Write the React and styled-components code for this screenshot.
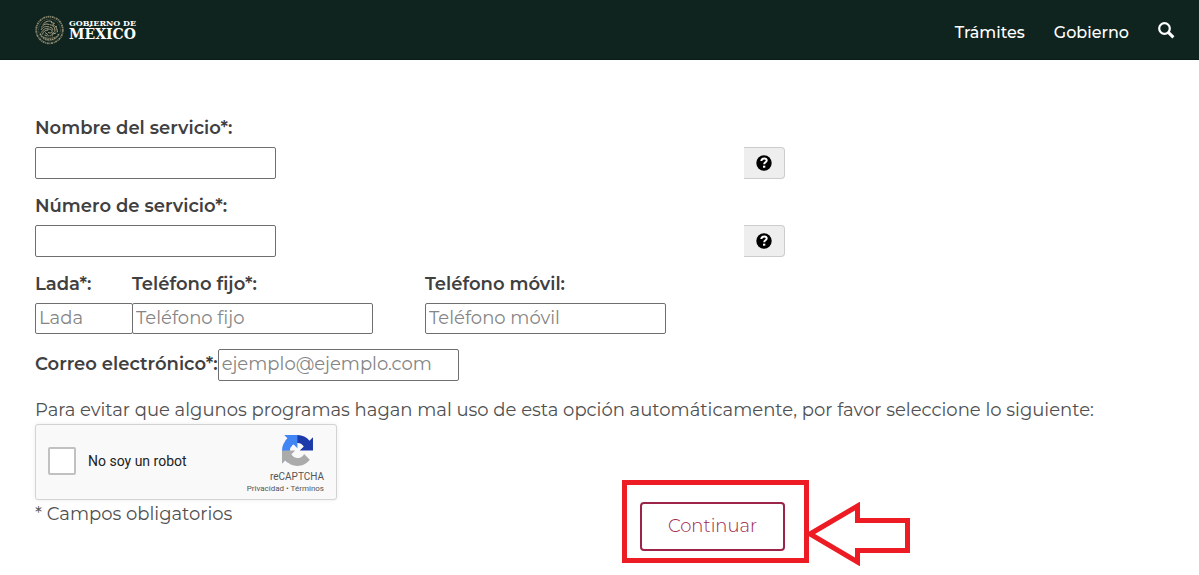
import React, { useState } from 'react';
import styled, { createGlobalStyle } from 'styled-components';

const GlobalStyle = createGlobalStyle`
  * {
    box-sizing: border-box;
  }

  body {
    margin: 0;
    background: #fff;
    color: #404041;
    font-family: Montserrat, Inter, sans-serif;
    font-size: 18px;
    font-weight: 300;
    line-height: 28px;
  }
`;

const Header = styled.header`
  display: flex;
  align-items: center;
  justify-content: space-between;
  height: 60px;
  padding: 0 24px 0 35px;
  background-color: #0f241f;
  border-bottom: 1px solid #0b1b17;
`;

const Brand = styled.a`
  display: flex;
  align-items: center;
  gap: 5px;
  color: #fff;
  text-decoration: none;
  font-family: 'DejaVu Serif', serif;
  font-weight: 700;
`;

const BrandText = styled.span`
  display: flex;
  flex-direction: column;
`;

const BrandSmall = styled.span`
  font-size: 8px;
  line-height: 10px;
`;

const BrandLarge = styled.span`
  font-size: 14px;
  line-height: 13px;
`;

const Nav = styled.nav`
  display: flex;
  align-items: center;
  gap: 29px;
  padding-top: 6px;
`;

const NavLink = styled.a`
  color: #fff;
  font-size: 16px;
  font-weight: 500;
  line-height: 24px;
  text-decoration: none;
`;

const SearchButton = styled.button`
  display: flex;
  padding: 0 0 4px;
  border: none;
  background: none;
  color: #fff;
  cursor: pointer;
`;

const Form = styled.form`
  padding: 55px 35px 24px;
`;

const Fields = styled.div`
  max-width: 750px;
`;

const Field = styled.div`
  display: flex;
  flex-direction: column;
  align-items: flex-start;
  gap: 6px;
  margin-bottom: 14px;
  width: ${({ $width }) => $width || 'auto'};
`;

const Label = styled.label`
  font-size: 18px;
  font-weight: 600;
  line-height: 26px;
  white-space: nowrap;
`;

const InputRow = styled.div`
  display: flex;
  align-self: stretch;
  justify-content: space-between;
`;

const Input = styled.input`
  width: ${({ $short }) => ($short ? '98px' : '241px')};
  height: ${({ $compact }) => ($compact ? '31px' : '32px')};
  padding: 0 3px 2px;
  border: 1px solid #6f6f6f;
  border-radius: 2px;
  background: #fff;
  color: #404041;
  font-family: inherit;
  font-size: 18px;
  font-weight: 400;

  &::placeholder {
    color: #858585;
    opacity: 1;
  }
`;

const HelpButton = styled.button`
  display: flex;
  align-items: center;
  justify-content: center;
  width: 41px;
  height: 32px;
  padding: 0;
  border: 1px solid #ccc;
  border-left: none;
  border-radius: 0 4px 4px 0;
  background-color: #eee;
  color: #000;
  cursor: pointer;
`;

const PhoneRow = styled.div`
  display: flex;
`;

const EmailRow = styled.div`
  display: flex;
  align-items: center;
  margin: 1px 0 15px;

  label {
    padding-bottom: 2px;
  }
`;

const Text = styled.p`
  margin: 0;
  color: #505051;
  font-weight: 400;
`;

const Captcha = styled.div`
  display: flex;
  justify-content: space-between;
  width: 302px;
  height: 76px;
  padding: 0 12px;
  border: 1px solid #d3d3d3;
  border-radius: 3px;
  background-color: #f9f9f9;
  box-shadow: 0 0 4px rgba(0, 0, 0, 0.08);
  font-family: Roboto, sans-serif;
  font-weight: 400;
`;

const CaptchaLabel = styled.label`
  display: flex;
  align-items: center;
  gap: 12px;
  padding-bottom: 2px;
  color: #222;
  font-size: 14px;
  line-height: 17px;
`;

const Checkbox = styled.input`
  appearance: none;
  width: 28px;
  height: 28px;
  margin: 0;
  border: 2px solid #c1c1c1;
  border-radius: 2px;
  background-color: #fff;

  &:checked {
    background-color: #4a90e2;
  }
`;

const CaptchaBrand = styled.div`
  display: flex;
  flex-direction: column;
  align-items: flex-end;
  padding-top: 10px;
  color: #555;
  font-size: 10px;
  line-height: 12px;

  svg {
    margin: 0 11px 5px 0;
  }
`;

const CaptchaLinks = styled.div`
  font-size: 8px;
  line-height: 12px;

  a {
    color: inherit;
    text-decoration: none;
  }
`;

const Actions = styled.div`
  display: flex;
  align-items: flex-start;
  justify-content: space-between;
`;

const SubmitArea = styled.div`
  position: relative;
  padding-top: 2px;
`;

const SubmitButton = styled.button`
  display: block;
  width: 145px;
  height: 49px;
  padding: 0 0 2px;
  border: 2px solid #9d2449;
  border-radius: 4px;
  background: #fff;
  color: #9d2449;
  font-family: inherit;
  font-size: 18px;
  font-weight: 300;
  cursor: pointer;
`;

const Highlight = styled.div`
  position: absolute;
  top: -20px;
  left: -18px;
  width: 187px;
  height: 83px;
  border: 5px solid #ed1c24;
  pointer-events: none;
`;

const Arrow = styled.svg`
  position: absolute;
  top: 2px;
  left: 166px;
`;

const Seal = () => (
  <svg width="29" height="30" viewBox="0 0 29 30" fill="none" stroke="#a79d80" aria-hidden="true">
    <circle cx="14.5" cy="15" r="13.300" strokeWidth="1.800" strokeDasharray="2 .6 1 .7" opacity=".8" />
    <circle cx="14.5" cy="15" r="10.900" strokeWidth=".7" strokeDasharray="2 .8" opacity=".5" />
    <path
      d="M8 9.500c2-3 6-4.400 9-2.800M6.500 12.500c1.500-3.500 5-4 7.500-3M6 15c2-3.500 5-4 8-3M6.400 17.500c2-3.500 4.500-4.500 7-4M7.500 19.500c.5-3 3-4.500 5.500-4.400M16 7.500l3.500.8-1.800 1.300c2.800 1.200 4.600 3.500 4.500 6.500M14.500 9.500c3 .6 5.500 2.500 5.500 5.500 0 2.200-1.400 3.400-3.200 3.300M14.500 12c2 .5 3.500 1.500 3.400 3.200M12.500 14.500c3-.8 5 .3 4.500 2.300-.4 1.500-3 1.700-4 .2M10 17.500l3 2.200M16.500 19.500l4.500-1.500M20.500 12l1.500-1M9.500 20l2 .5M21.500 17l1.500-.5"
      strokeWidth="1"
    />
    <path d="M5.300 18.500c1.500 4.500 5.200 6.300 9.200 6.300s7.700-2 9.200-6.300" strokeWidth="1.300" strokeDasharray="1.800 .6" />
    <path d="M8.500 21.800c3.400 2 8.600 2 12 0M11 20.800h7" strokeWidth=".9" strokeDasharray="1.500 .5" />
  </svg>
);

const SearchIcon = () => (
  <svg width="17" height="17" viewBox="0 0 17 17" fill="none" stroke="currentColor" aria-hidden="true">
    <circle cx="6.500" cy="6.500" r="5.300" strokeWidth="2.200" />
    <path d="M10.400 10.400l5 5" strokeWidth="3" />
  </svg>
);

const HelpIcon = () => (
  <svg width="16" height="16" viewBox="0 0 16 16" aria-hidden="true">
    <circle cx="8" cy="8" r="7.700" fill="#000" />
    <path d="M5.300 6c.2-1.900 1.300-2.500 2.900-2.500 1.500 0 2.500.8 2.500 2 0 1.900-2.500 1.700-2.500 3.800" fill="none" stroke="#fff" strokeWidth="2" />
    <path d="M7 10.700h2.300v2H7z" fill="#fff" />
  </svg>
);

const CaptchaLogo = () => (
  <svg width="31" height="31" viewBox="0 0 64 64" aria-hidden="true">
    <path
      fill="#1c3aa9"
      d="M64 31.955l-.033-1.370V4.687l-7.160 7.160C50.948 4.674 42.033.093 32.050.093c-10.390 0-19.622 4.960-25.458 12.640l11.736 11.860a15.550 15.550 0 0 1 4.754-5.334c2.050-1.600 4.952-2.906 8.968-2.906.485 0 .860.057 1.135.163 4.976.393 9.288 3.140 11.828 7.124l-8.307 8.307L64 31.953"
    />
    <path
      fill="#4285f4"
      d="M31.862.094l-1.370.033H4.594l7.160 7.160C4.580 13.147 0 22.060 0 32.046c0 10.390 4.960 19.622 12.640 25.458L24.500 45.768a15.550 15.550 0 0 1-5.334-4.754c-1.600-2.050-2.906-4.952-2.906-8.968 0-.485.057-.860.163-1.135.393-4.976 3.140-9.288 7.124-11.828l8.307 8.307L31.860.095"
    />
    <path
      fill="#ababab"
      d="M.001 32.045l.033 1.370v25.898l7.160-7.160c5.860 7.173 14.774 11.754 24.760 11.754 10.390 0 19.622-4.960 25.458-12.640l-11.736-11.860a15.550 15.550 0 0 1-4.754 5.334c-2.050 1.600-4.952 2.906-8.968 2.906-.485 0-.860-.057-1.135-.163-4.976-.393-9.288-3.140-11.828-7.124l8.307-8.307L0 32.045"
    />
  </svg>
);

const App = () => {
  const [values, setValues] = useState({ name: '', number: '', lada: '', phone: '', mobile: '', email: '' });
  const [checked, setChecked] = useState(false);

  const handleChange = (e) => {
    setValues({ ...values, [e.target.id]: e.target.value });
  };

  const handleSubmit = (e) => {
    e.preventDefault();
  };

  return (
    <>
      <GlobalStyle />
      <Header>
        <Brand href="#" aria-label="Gobierno de México">
          <Seal />
          <BrandText>
            <BrandSmall>GOBIERNO DE</BrandSmall>
            <BrandLarge>MÉXICO</BrandLarge>
          </BrandText>
        </Brand>
        <Nav>
          <NavLink href="#">Trámites</NavLink>
          <NavLink href="#">Gobierno</NavLink>
          <SearchButton type="button" aria-label="Buscar">
            <SearchIcon />
          </SearchButton>
        </Nav>
      </Header>

      <Form onSubmit={handleSubmit}>
        <Fields>
          <Field>
            <Label htmlFor="name">Nombre del servicio*:</Label>
            <InputRow>
              <Input id="name" value={values.name} onChange={handleChange} />
              <HelpButton type="button" aria-label="Ayuda">
                <HelpIcon />
              </HelpButton>
            </InputRow>
          </Field>

          <Field>
            <Label htmlFor="number">Número de servicio*:</Label>
            <InputRow>
              <Input id="number" value={values.number} onChange={handleChange} />
              <HelpButton type="button" aria-label="Ayuda">
                <HelpIcon />
              </HelpButton>
            </InputRow>
          </Field>

          <PhoneRow>
            <Field $width="97px">
              <Label htmlFor="lada">Lada*:</Label>
              <Input id="lada" placeholder="Lada" $short $compact value={values.lada} onChange={handleChange} />
            </Field>
            <Field $width="293px">
              <Label htmlFor="phone">Teléfono fijo*:</Label>
              <Input id="phone" placeholder="Teléfono fijo" $compact value={values.phone} onChange={handleChange} />
            </Field>
            <Field>
              <Label htmlFor="mobile">Teléfono móvil:</Label>
              <Input id="mobile" placeholder="Teléfono móvil" $compact value={values.mobile} onChange={handleChange} />
            </Field>
          </PhoneRow>

          <EmailRow>
            <Label htmlFor="email">Correo electrónico*:</Label>
            <Input
              id="email"
              type="email"
              placeholder="ejemplo@ejemplo.com"
              value={values.email}
              onChange={handleChange}
            />
          </EmailRow>
        </Fields>

        <Text>
          Para evitar que algunos programas hagan mal uso de esta opción automáticamente, por favor seleccione lo
          siguiente:
        </Text>

        <Captcha>
          <CaptchaLabel>
            <Checkbox type="checkbox" checked={checked} onChange={(e) => setChecked(e.target.checked)} />
            No soy un robot
          </CaptchaLabel>
          <CaptchaBrand>
            <CaptchaLogo />
            <span>reCAPTCHA</span>
            <CaptchaLinks>
              <a href="#">Privacidad</a> • <a href="#">Términos</a>
            </CaptchaLinks>
          </CaptchaBrand>
        </Captcha>

        <Fields>
          <Actions>
            <Text>* Campos obligatorios</Text>
            <SubmitArea>
              <SubmitButton type="submit">Continuar</SubmitButton>
              <Highlight />
              <Arrow width="105" height="64" viewBox="0 0 105 64" fill="none" stroke="#ed1c24" strokeWidth="5">
                <path d="M4 32L51.500 4v14.500H101.500v30H51.500V60z" />
              </Arrow>
            </SubmitArea>
          </Actions>
        </Fields>
      </Form>
    </>
  );
};

export default App;
